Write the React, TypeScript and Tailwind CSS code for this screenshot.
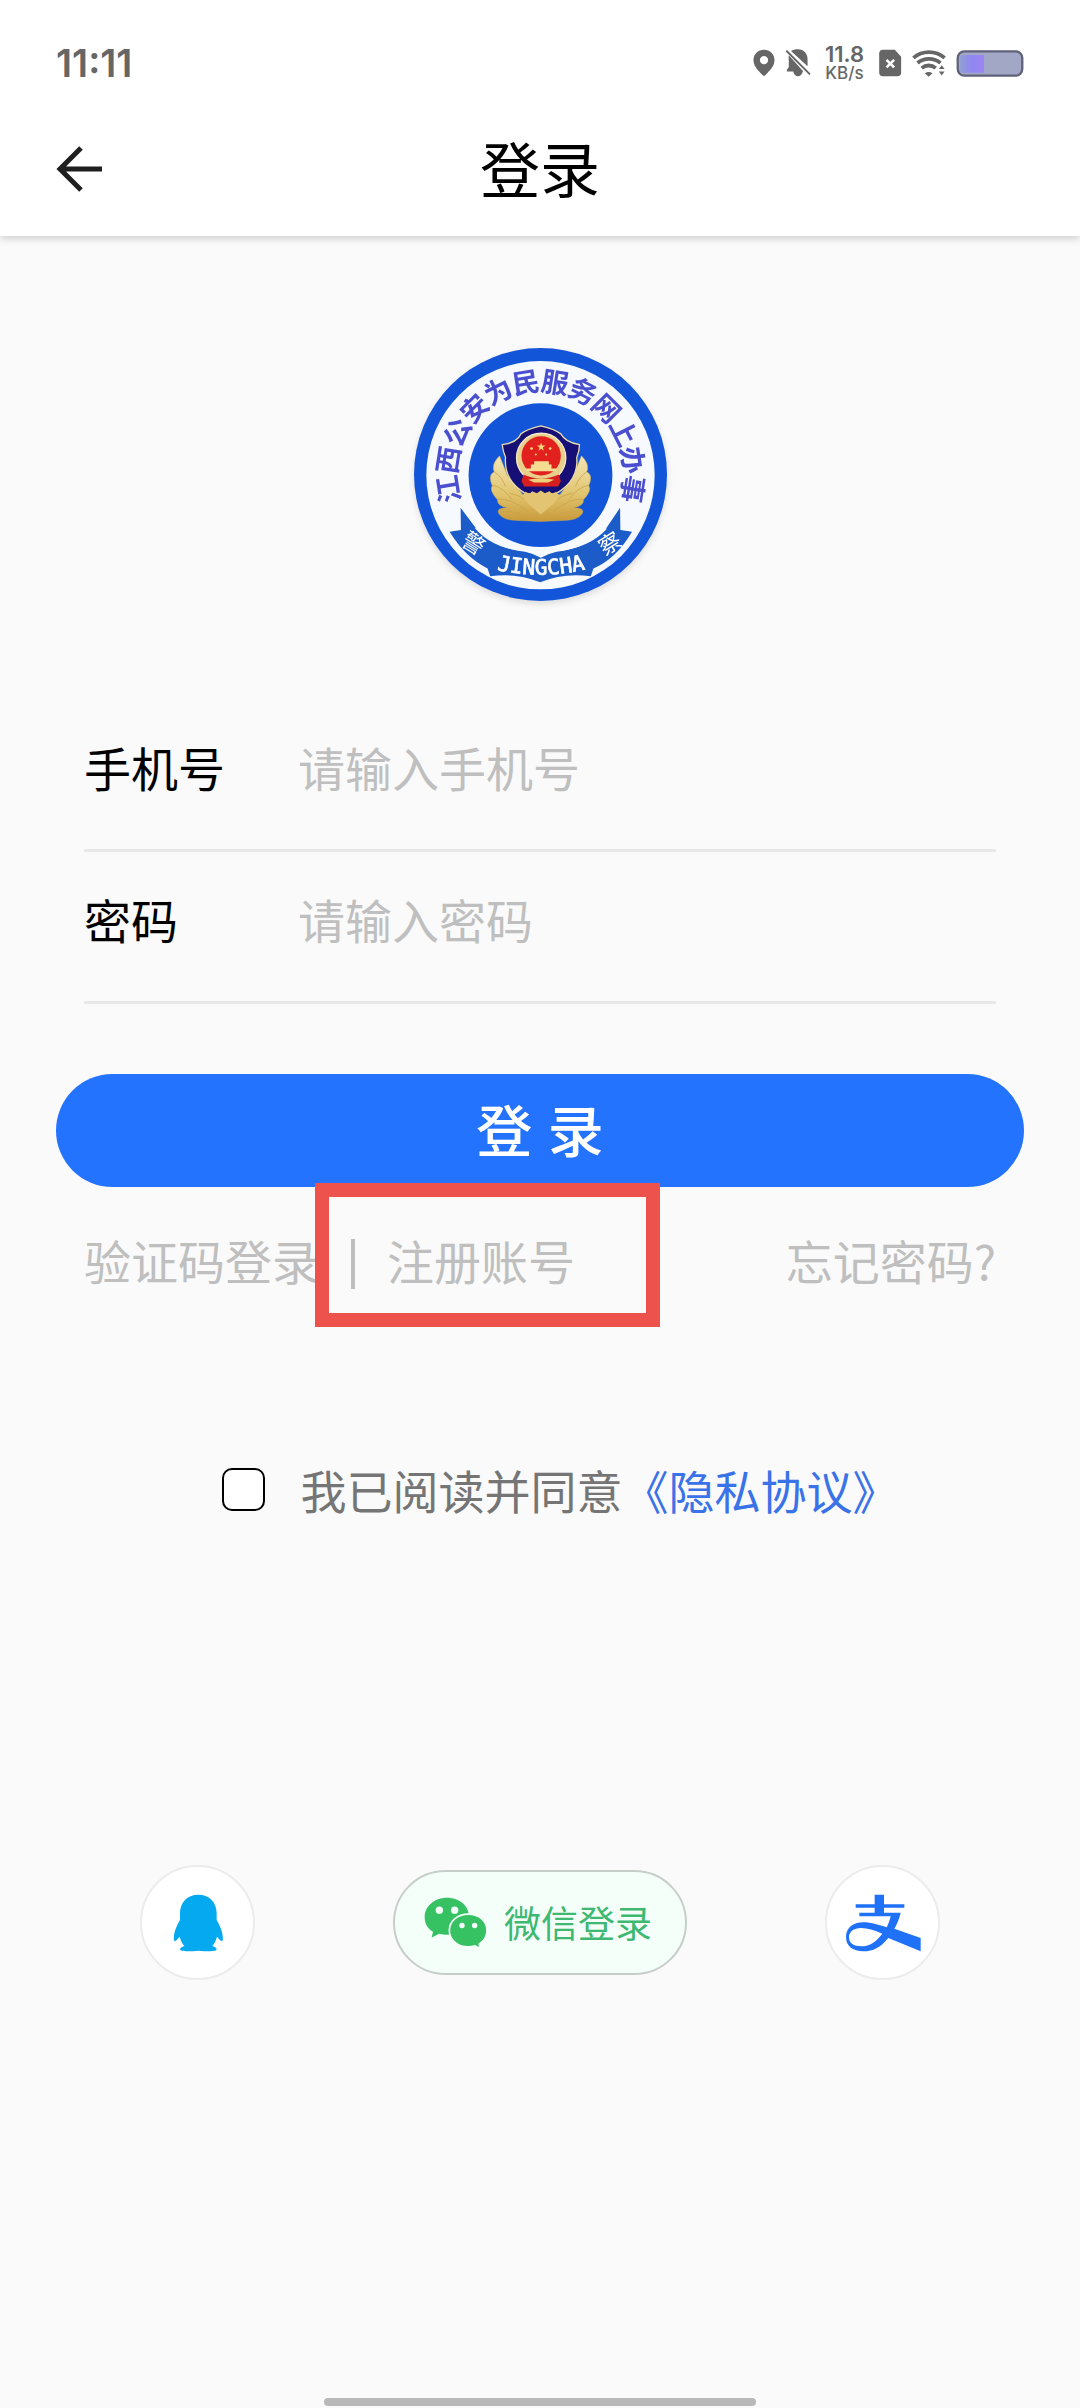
import { useState } from 'react';

const MOTTO = '江西公安为民服务网上办事';

function StatusBar() {
  return (
    <div className="flex h-[126px] items-center justify-between px-14 font-['Inter','Noto_Sans_CJK_SC',sans-serif] text-[#666666]">
      <span className="text-[38px] leading-none font-semibold">11:11</span>
      <div className="flex items-center">
        <svg viewBox="98 88 68 88" className="mr-2.5 h-7 w-[22px]" fill="#666666">
          <path
            fillRule="evenodd"
            d="M132 90c-19 0-33 14-33 33 0 22 21 38 33 51 12-13 33-29 33-51 0-19-14-33-33-33zm0 20a13 13 0 1 1 0 26a13 13 0 0 1 0-26z"
          />
        </svg>
        <svg viewBox="196 88 78 88" className="mr-3.5 h-7 w-[26px]" fill="#666666">
          <path d="M213 94c6-3 13-5 22-5 19 0 30 14 30 32v21z" />
          <path d="M206 108l46 51h-2c-2 9-8 15-15 15s-13-6-15-15h-20v-6l6-8v-22c0-6-1-10 0-15z" />
          <path d="M200 95l71 71" stroke="#666666" strokeWidth="6" strokeLinecap="round" />
        </svg>
        <div className="mr-3.5 flex flex-col items-center leading-none font-semibold">
          <span className="text-[22px] leading-[20px]">11.8</span>
          <span className="text-[17px] leading-[18px] font-medium">KB/s</span>
        </div>
        <svg viewBox="472 88 72 88" className="mr-2.5 h-7 w-6">
          <path
            d="M486 90h37l20 22v50q0 12-12 12h-45q-12 0-12-12v-60q0-12 12-12z"
            fill="#666666"
          />
          <path d="M497 122l24 24M521 122l-24 24" stroke="#fff" strokeWidth="8" />
        </svg>
        <svg viewBox="574 88 106 88" className="mr-2.5 h-7 w-[34px]" fill="none" stroke="#666666">
          <path d="M578 116c28-24 70-24 98 0" strokeWidth="12" />
          <path d="M591 132c20-17 52-17 72 0" strokeWidth="12" />
          <path d="M604 148c13-11 31-11 44 0" strokeWidth="12" />
          <path
            d="M614 164q12-8 24 0l-12 11z"
            fill="#666666"
            stroke="none"
          />
          <path d="M652 174v-38h28v38z" fill="#fff" stroke="none" />
          <path d="M658 151l9-12 9 12zM658 159l9 12 9-12z" fill="#666666" stroke="none" />
        </svg>
        <svg viewBox="707 91 204 82" className="h-[27px] w-[68px]">
          <defs>
            <linearGradient id="charge">
              <stop offset="0" stopColor="#8f9fd6" />
              <stop offset="0.5" stopColor="#9186f0" />
              <stop offset="1" stopColor="#9c86f2" />
            </linearGradient>
          </defs>
          <rect x="711" y="95" width="196" height="74" rx="20" fill="#a3a7c6" stroke="#5f6278" strokeWidth="7" />
          <path d="M728 106h63v54h-63q-10 0-10-10v-34q0-10 10-10z" fill="url(#charge)" />
        </svg>
      </div>
    </div>
  );
}

function Emblem() {
  return (
    <svg
      viewBox="43 50 760 760"
      className="size-[253px] drop-shadow-md"
      role="img"
      aria-label="江西公安为民服务网上办事"
    >
      <defs>
        <linearGradient id="gold" x1="0" y1="0" x2="0" y2="1">
          <stop offset="0" stopColor="#f3e6b8" />
          <stop offset="0.6" stopColor="#e0c36b" />
          <stop offset="1" stopColor="#c9993a" />
        </linearGradient>
      </defs>
      <circle cx="423" cy="430" r="380" fill="#1355d9" />
      <circle cx="423" cy="432" r="343" fill="#f6f9fe" />
      <circle cx="423" cy="432" r="216" fill="#1355d9" />

      {/* characters around the upper ring */}
      {MOTTO.split('').map((char, i) => (
        <text
          key={char}
          x="423"
          y="180"
          textAnchor="middle"
          fontSize="82"
          transform={`rotate(${-99 + i * 18} 423 430)`}
          className="fill-[#4a4fd0] font-['Noto_Sans_CJK_SC',sans-serif] font-bold"
        >
          {char}
        </text>
      ))}

      {/* ribbon */}
      <path
        d="M183 530L228 590C264 632 318 656 377 662Q404 668 424 680Q444 668 471 662C530 655 584 632 620 592L662 530L663 597L698 602Q650 684 582 712L574 736Q494 724 422 754Q350 724 272 736L264 712Q198 680 150 602L184 597z"
        fill="#1b5cc9"
      />
      <path d="M228 590C264 632 318 654 377 658Q404 664 424 676Q444 664 471 658C530 652 584 632 620 592" fill="none" stroke="#f6f9fe" strokeWidth="5" />
      <g className="fill-white font-['Noto_Sans_CJK_SC',sans-serif]" textAnchor="middle">
        <text fontSize="66" transform="translate(209 657) rotate(32)">警</text>
        <text fontSize="66" transform="translate(644 657) rotate(-32)">察</text>
      </g>
      <path id="ribbonLine" d="M270 711Q424 752 580 709" fill="none" />
      <text
        className="fill-white stroke-white stroke-2 font-['DejaVu_Sans_Mono',monospace]"
        fontSize="64"
      >
        <textPath href="#ribbonLine" startOffset="50%" textAnchor="middle">
          JINGCHA
        </textPath>
      </text>

      {/* wheat ears */}
      <g fill="url(#gold)" stroke="#c9a44e" strokeWidth="1.5">
        <path d="M300 374q-26 26-16 48q-20 10-6 42q-10 14 16 42q-2 18 30 24q-36 0-26 18q14 20 56 20l69 3 69-3q42 0 56-20q10-18-26-18q32-6 30-24q26-28 16-42q14-32-6-42q10-22-16-48l-24 60-40 56H370l-46-56z" />
        <path
          d="M284 422q24 16 34 44M278 462q34 6 60 44M294 504q40-4 92 38M298 542q60-8 110 26M562 422q-24 16-34 44M568 462q-34 6-60 44M552 504q-40-4-92 38M548 542q-60-8-110 26M330 486q60 12 94 68q34-56 94-68"
          fill="none"
          strokeWidth="2.5"
        />
      </g>

      {/* shield */}
      <path
        d="M424 284Q382 294 364 308Q354 334 308 340Q310 362 318 378Q312 450 380 488H468Q538 450 532 378Q540 360 540 340Q498 334 484 308Q466 294 424 284z"
        fill="#160f76"
        stroke="#e9dba9"
        strokeWidth="4"
      />
      <circle cx="425" cy="380" r="74" fill="#e8cf8a" stroke="#f6ecc8" strokeWidth="4" />
      <circle cx="425" cy="374" r="59" fill="#e2211f" />
      <path d="M425 334l3 9h10l-8 6 3 10-8-6-8 6 3-10-8-6h10z" fill="#f7dc7c" />
      <g fill="#f7dc7c">
        <circle cx="396" cy="352" r="4" />
        <circle cx="409" cy="370" r="3" />
        <circle cx="440" cy="370" r="3" />
        <circle cx="452" cy="352" r="4" />
      </g>
      <path d="M404 390h44v10h8v12h14v8h-90v-8h14v-12h10z" fill="#f4dd92" />
      <path d="M372 430q26 12 53 12t53-12l6 20-8 16H374l-8-16z" fill="#d81f1f" />
      <path d="M386 446q40-10 78 0l-18 8h-42z" fill="#efd07a" />
      <path
        d="M368 496l10-14 12 6 8-8 14 6 12-8 12 8 14-6 8 8 12-6 10 14-18 22-38 32-38-32z"
        fill="#e3c472"
      />
    </svg>
  );
}

interface FieldProps {
  id: string;
  label: string;
  type: string;
  placeholder: string;
  value: string;
  onChange: (value: string) => void;
}

function Field({ id, label, type, placeholder, value, onChange }: FieldProps) {
  return (
    <div className="flex h-[152px] items-center border-b-3 border-[#e8e8e8] pb-3.5">
      <label htmlFor={id} className="w-[214px] shrink-0 text-[47px] text-black">
        {label}
      </label>
      <input
        id={id}
        type={type}
        placeholder={placeholder}
        value={value}
        onChange={(e) => onChange(e.target.value)}
        className="min-w-0 flex-1 bg-transparent text-[47px] outline-none placeholder:text-[#bfbfbf]"
      />
    </div>
  );
}

export default function App() {
  const [phone, setPhone] = useState('');
  const [password, setPassword] = useState('');
  const [agreed, setAgreed] = useState(false);

  return (
    <div className="flex min-h-screen flex-col bg-[#fafafa] font-['Noto_Sans_CJK_SC',sans-serif]">
      <header className="bg-white shadow-[0_2px_8px_rgba(0,0,0,0.2)]">
        <StatusBar />
        <div className="grid h-[110px] grid-cols-[1fr_auto_1fr] items-center px-14 pb-6">
          <button type="button" aria-label="返回" className="justify-self-start">
            <svg viewBox="0 0 46 46" className="size-[46px]" fill="none" stroke="#1f1f1f" strokeWidth="5">
              <path d="M46 23H5M25 2L4 23l21 21" />
            </svg>
          </button>
          <h1 className="pb-1 text-[60px] leading-none text-black">登录</h1>
        </div>
      </header>

      <main className="flex flex-col">
        <div className="mt-28 flex justify-center">
          <Emblem />
        </div>

        <form onSubmit={(e) => e.preventDefault()} className="mt-[99px]">
          <div className="px-[84px]">
            <Field
              id="phone"
              label="手机号"
              type="tel"
              placeholder="请输入手机号"
              value={phone}
              onChange={setPhone}
            />
            <Field
              id="password"
              label="密码"
              type="password"
              placeholder="请输入密码"
              value={password}
              onChange={setPassword}
            />
          </div>

          <div className="mt-[70px] px-14">
            <button
              type="submit"
              className="h-[113px] w-full rounded-full bg-[#2373ff] pt-1 font-['Liberation_Sans','Noto_Sans_CJK_SC',sans-serif] text-[56px] leading-none font-medium text-white"
            >
              登 录
            </button>
          </div>

          <div className="mt-[37px] flex h-[72px] items-center px-[84px] text-[47px] text-[#bfbfbf]">
            <a href="#code">验证码登录</a>
            <span className="mx-8 mt-2 h-[50px] w-1 bg-[#bfbfbf]" />
            <div className="relative">
              <a href="#register">注册账号</a>
              <span className="pointer-events-none absolute -top-[42px] -left-[72px] h-[144px] w-[345px] border-14 border-[#ee524c]" />
            </div>
            <a href="#forgot" className="ml-auto">
              忘记密码?
            </a>
          </div>

          <div className="mt-[155px] flex h-[76px] items-center justify-center pl-10 text-[46px]">
            <input
              id="agree"
              type="checkbox"
              checked={agreed}
              onChange={(e) => setAgreed(e.target.checked)}
              className="mr-9 size-[43px] appearance-none rounded-[10px] border-2 border-black bg-white checked:bg-[#2373ff]"
            />
            <label htmlFor="agree" className="text-[#757575]">
              我已阅读并同意
            </label>
            <a href="#privacy" className="text-[#3a72e8]">
              《隐私协议》
            </a>
          </div>
        </form>

        <div className="mt-[338px] flex items-center justify-between px-[140px]">
          <button
            type="button"
            aria-label="QQ登录"
            className="flex size-[115px] items-center justify-center rounded-full border-2 border-[#ececec] bg-white"
          >
            <svg viewBox="160 163 150 174" className="h-[58px] w-[50px]" fill="#04a9f0">
              <path d="M236 165c-34 0-55 24-55 56v20c-8 14-17 33-18 48-1 8-1 13 1 15 4 1 11-6 16-13 3 12 8 21 14 28-8 3-13 6-13 10 0 7 26 7 55 4 29 3 55 3 55-4 0-4-5-7-13-10 6-7 11-16 14-28 5 7 12 14 16 13 2-2 2-7 1-15-1-15-10-34-18-48v-20c0-32-21-56-55-56z" />
            </svg>
          </button>

          <button
            type="button"
            className="flex h-[105px] w-[294px] items-center justify-center gap-4 rounded-full border-2 border-[#c6cec9] bg-[#f5fff9] pr-1 text-[37px] text-[#3fb871]"
          >
            <svg viewBox="131 172 192 155" className="h-[52px] w-16">
              <path
                d="M200 174c-38 0-67 26-67 58 0 19 9 34 25 44l-4 17 23-11c7 2 15 3 23 3 38 0 66-24 66-54 0-32-28-57-66-57z"
                fill="#36c163"
              />
              <path
                d="M264 223c-33 0-57 22-57 49s24 49 57 49c7 0 14-1 20-3l15 8-2-14c14-9 23-23 23-40 0-27-23-49-56-49z"
                fill="#36c163"
                stroke="#f5fff9"
                strokeWidth="5"
              />
              <g fill="#f5fff9">
                <circle cx="177" cy="211" r="11" />
                <circle cx="223" cy="211" r="11" />
                <circle cx="245" cy="257" r="8" />
                <circle cx="283" cy="257" r="8" />
              </g>
            </svg>
            微信登录
          </button>

          <button
            type="button"
            aria-label="支付宝登录"
            className="flex size-[115px] items-center justify-center rounded-full border-2 border-[#ececec] bg-white"
          >
            <svg viewBox="135 163 228 174" className="h-[58px] w-[76px]" fill="#1f72f8">
              <path
                fillRule="evenodd"
                d="M224 165h28v29h61v10h-61v15h50c-4 18-11 34-19 48l79 28v40l-97-40c-24 29-46 40-74 40-34 0-53-17-53-43 0-28 22-44 51-44 28 0 46 8 71 15 5-9 9-20 12-33h-94v-11h46v-15h-57v-10h57zM247 282c-24-10-44-17-64-17-22 0-36 11-36 28 0 18 14 27 37 27 26 0 45-14 63-38z"
              />
            </svg>
          </button>
        </div>
      </main>

      <div className="mx-auto mt-auto mb-0.5 h-2 w-2/5 rounded-full bg-[#b8b8b8]" />
    </div>
  );
}
